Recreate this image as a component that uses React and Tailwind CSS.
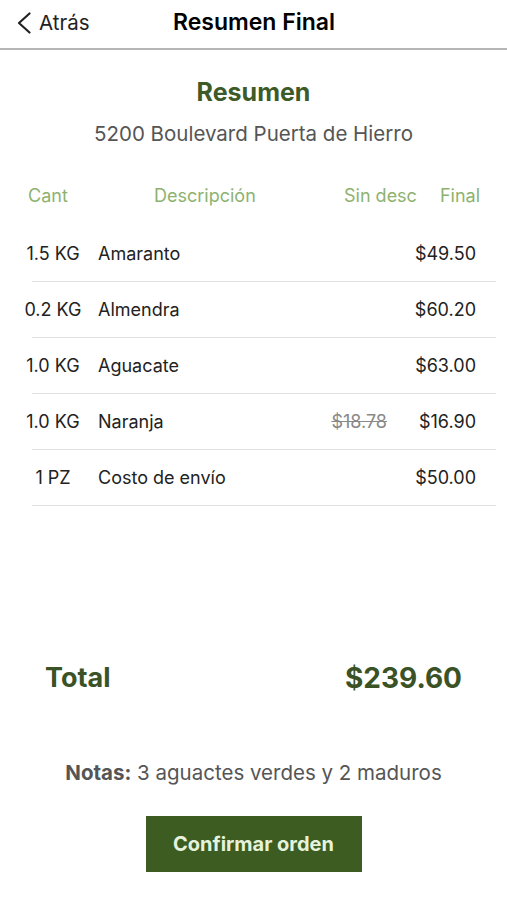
const items = [
    { qty: "1.5 KG", desc: "Amaranto", price: "$49.50" },
    { qty: "0.2 KG", desc: "Almendra", price: "$60.20" },
    { qty: "1.0 KG", desc: "Aguacate", price: "$63.00" },
    { qty: "1.0 KG", desc: "Naranja", old: "$18.78", price: "$16.90" },
    { qty: "1 PZ", desc: "Costo de envío", price: "$50.00" },
]

const BackChevron = () => (
    <svg width="14" height="22" viewBox="0 0 14 22" fill="none">
        <polyline points="12.5,1.5 2,11 12.5,20.5" stroke="#222" strokeWidth="2.2" strokeLinecap="round" strokeLinejoin="round" />
    </svg>
)

const App = () => {
    return (
        <div className="w-[507px] h-[900px] bg-white flex flex-col" style={{ fontFamily: 'Inter, "Liberation Sans", sans-serif' }}>
            {/* top bar */}
            <div className="relative h-[50px] flex items-center justify-center border-b-2 border-[#b5b5b5]">
                <button className="absolute left-[17px] top-[8px] flex items-center gap-[8px] text-[20.5px] text-[#222]">
                    <BackChevron />
                    Atrás
                </button>
                <div className="text-[23px] font-semibold text-black -mt-[4px] ml-[1px]">Resumen Final</div>
            </div>

            <div className="flex flex-col items-center mt-[27px]">
                <h1 className="text-[25px] font-bold text-[#3d5a29] leading-[30px]">Resumen</h1>
                <div className="text-[20.5px] text-[#555] mt-[12px]">5200 Boulevard Puerta de Hierro</div>
            </div>

            {/* table header */}
            <div className="flex items-center mt-[34px] pl-[28px] pr-[27px] text-[18px] text-[#8db26f] h-[24px]">
                <div className="w-[126px]">Cant</div>
                <div className="flex-1">Descripción</div>
                <div>Sin desc</div>
                <div className="ml-[23px]">Final</div>
            </div>

            <div className="flex flex-col mt-[18px]">
                {items.map((item) => (
                    <div key={item.desc} className="flex items-center h-[56px] ml-[32px] mr-[11px] border-b border-[#e2e2e2] text-[18px] text-[#222]">
                        <div className="w-[66px] -ml-[12px] text-center whitespace-nowrap">{item.qty}</div>
                        <div className="flex-1 pl-[12px]">{item.desc}</div>
                        <div className="text-[#888] line-through">{item.old}</div>
                        <div className="w-[109px] text-right pr-[20px]">{item.price}</div>
                    </div>
                ))}
            </div>

            <div className="flex-1" />

            <div className="flex items-center justify-between pl-[45px] pr-[45px] text-[28px] font-bold text-[#3b5226] pb-[59px]">
                <div className="text-[27px]">Total</div>
                <div>$239.60</div>
            </div>

            <div className="text-center text-[20.5px] text-[#555]">
                <span className="font-bold">Notas:</span> 3 aguactes verdes y 2 maduros
            </div>

            <div className="flex justify-center mt-[27px] mb-[28px]">
                <button className="w-[216px] h-[56px] bg-[#3d5c22] text-[#e6f3dc] text-[20px] font-bold">Confirmar orden</button>
            </div>
        </div>
    )
}

export default App;
